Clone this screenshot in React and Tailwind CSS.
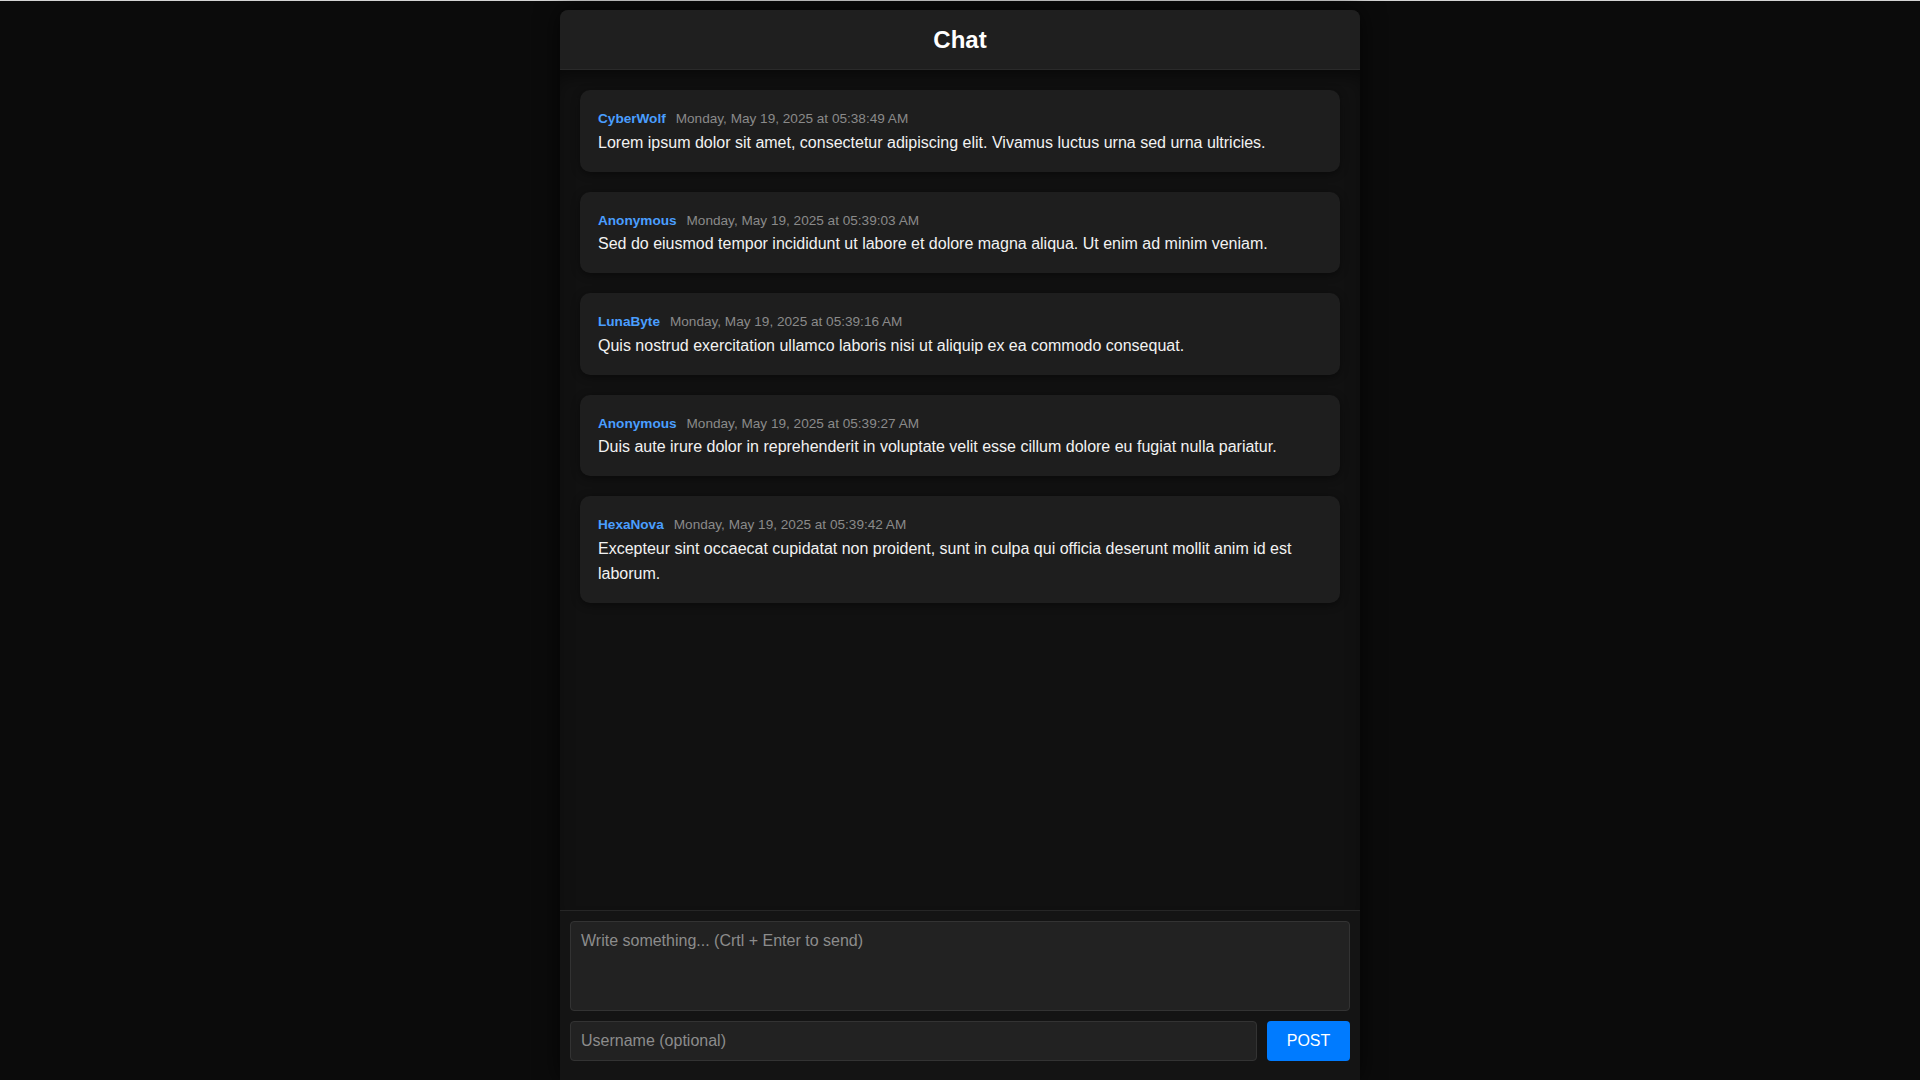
const messages = [
  {
    user: 'CyberWolf',
    time: 'Monday, May 19, 2025 at 05:38:49 AM',
    text: 'Lorem ipsum dolor sit amet, consectetur adipiscing elit. Vivamus luctus urna sed urna ultricies.',
  },
  {
    user: 'Anonymous',
    time: 'Monday, May 19, 2025 at 05:39:03 AM',
    text: 'Sed do eiusmod tempor incididunt ut labore et dolore magna aliqua. Ut enim ad minim veniam.',
  },
  {
    user: 'LunaByte',
    time: 'Monday, May 19, 2025 at 05:39:16 AM',
    text: 'Quis nostrud exercitation ullamco laboris nisi ut aliquip ex ea commodo consequat.',
  },
  {
    user: 'Anonymous',
    time: 'Monday, May 19, 2025 at 05:39:27 AM',
    text: 'Duis aute irure dolor in reprehenderit in voluptate velit esse cillum dolore eu fugiat nulla pariatur.',
  },
  {
    user: 'HexaNova',
    time: 'Monday, May 19, 2025 at 05:39:42 AM',
    text: 'Excepteur sint occaecat cupidatat non proident, sunt in culpa qui officia deserunt mollit anim id est laborum.',
  },
]

function Message({ user, time, text }) {
  return (
    <div className="rounded-[10px] bg-[#1e1e1e] px-[18px] pt-[18px] pb-[16px] shadow-[0_2px_8px_rgba(0,0,0,0.45)]">
      <div className="flex items-baseline gap-[10px] text-[13.6px] leading-[1.6]">
        <span className="font-bold text-[#4a9eff]">{user}</span>
        <span className="text-[#8a8a8a]">{time}</span>
      </div>
      <p className="mt-[1px] text-[16px] leading-[1.55] text-[#f2f2f2]">{text}</p>
    </div>
  )
}

export default function App() {
  return (
    <div className="h-screen overflow-hidden bg-[#0b0b0b] font-['Liberation_Sans',Arial,sans-serif]">
      <div className="h-px bg-[#d4d4d4]" />
      <div className="mx-auto mt-[9px] flex h-[1070px] w-[800px] flex-col rounded-t-[8px] bg-[#131313] shadow-[0_0_24px_rgba(0,0,0,0.7)]">
        <header className="flex h-[60px] shrink-0 items-center justify-center rounded-t-[8px] border-b border-[#2a2a2a] bg-[#1f1f1f]">
          <h1 className="text-[24px] font-bold text-white">Chat</h1>
        </header>

        <main className="flex flex-1 flex-col gap-5 bg-[#111] p-5 shadow-[inset_0_12px_20px_-8px_rgba(0,0,0,0.6)]">
          {messages.map((m, i) => (
            <Message key={i} {...m} />
          ))}
        </main>

        <footer className="flex shrink-0 flex-col gap-[10px] border-t border-[#262626] bg-[#141414] px-[10px] pt-[10px] pb-[19px]">
          <textarea
            placeholder="Write something... (Crtl + Enter to send)"
            className="h-[90px] resize-none rounded-[4px] border border-[#333] bg-[#222] px-[10px] py-[10px] text-[16px] leading-[18px] text-white placeholder-[#8c8c8c] outline-none"
          />
          <div className="flex gap-[10px]">
            <input
              placeholder="Username (optional)"
              className="h-10 flex-1 rounded-[4px] border border-[#333] bg-[#222] px-[10px] text-[16px] text-white placeholder-[#8c8c8c] outline-none"
            />
            <button className="h-10 w-[83px] rounded-[4px] bg-[#007bff] text-[16px] text-white">
              POST
            </button>
          </div>
        </footer>
      </div>
    </div>
  )
}
